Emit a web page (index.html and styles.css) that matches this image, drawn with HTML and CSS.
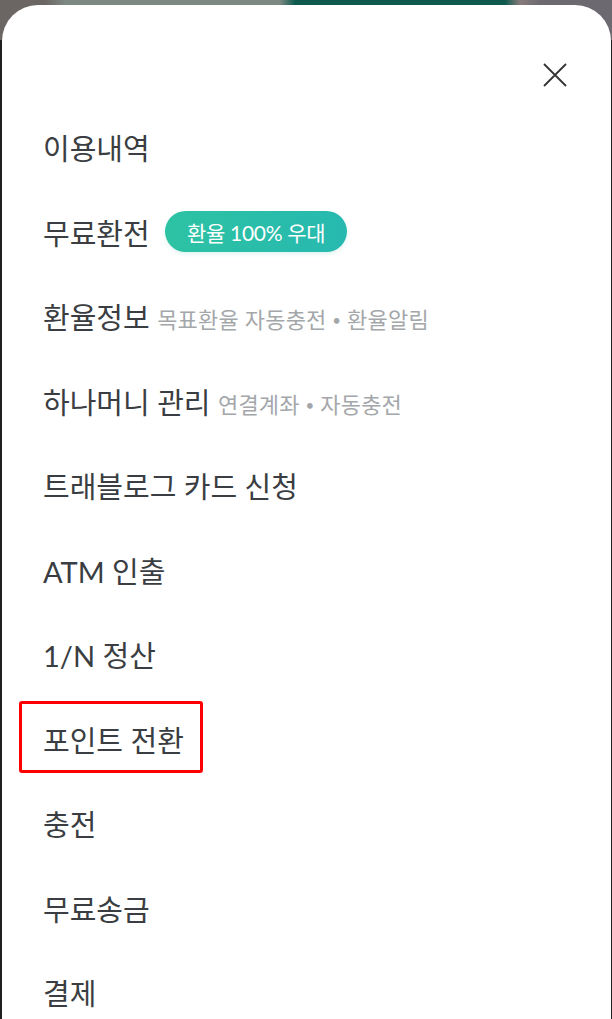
FILE: index.html
```html
<!DOCTYPE html>
<html lang="ko">
<head>
    <meta charset="utf-8">
    <title>메뉴</title>
    <link rel="stylesheet" href="styles.css">
</head>
<body>
    <div class="sheet">
        <div class="sheet-head">
            <button class="close" aria-label="닫기">
                <svg width="24" height="24" viewBox="0 0 24 24">
                    <path d="M1 1 L23 23 M23 1 L1 23" stroke="#333" stroke-width="1.8" fill="none"/>
                </svg>
            </button>
        </div>
        <ul class="menu">
            <li class="menu-item">이용내역</li>
            <li class="menu-item">무료환전 <span class="badge">환율 100% 우대</span></li>
            <li class="menu-item">환율정보 <span class="sub">목표환율 자동충전 <span class="dot">•</span> 환율알림</span></li>
            <li class="menu-item">하나머니 관리 <span class="sub">연결계좌 <span class="dot">•</span> 자동충전</span></li>
            <li class="menu-item">트래블로그 카드 신청</li>
            <li class="menu-item">ATM 인출</li>
            <li class="menu-item">1/N 정산</li>
            <li class="menu-item marked">포인트 전환</li>
            <li class="menu-item">충전</li>
            <li class="menu-item">무료송금</li>
            <li class="menu-item">결제</li>
        </ul>
    </div>
</body>
</html>
```

FILE: styles.css
```css
body {
    margin: 0;
    background-color: #202020;
    background-image: linear-gradient(to right, #6b6664 0, #6b6664 45px, #7d8882 65px, #7d8882 280px, #0f5a4e 295px, #0f5a4e 505px, #887a7b 520px, #6c6a70 540px, #6c6a70 100%);
    background-size: 100% 40px;
    background-repeat: no-repeat;
    font-family: Lato, "Noto Sans CJK KR", sans-serif;
    color: #3a3d41;
}
.sheet {
    margin: 5px 1px 0 2px;
    min-height: 1014px;
    background: #fff;
    border-radius: 36px 36px 0 0;
}
.sheet-head {
    height: 100px;
    display: flex;
    justify-content: flex-end;
    align-items: flex-start;
    padding-right: 44px;
    box-sizing: border-box;
    padding-top: 58px;
}
.close {
    border: none;
    background: none;
    padding: 0;
    width: 24px;
    height: 24px;
}
.menu {
    list-style: none;
    margin: 0;
    padding: 0;
}
.menu-item {
    height: 84.5px;
    display: flex;
    align-items: center;
    padding-left: 41px;
    font-size: 29px;
    white-space: pre;
    position: relative;
}
.badge {
    margin-left: 8px;
    width: 182px;
    height: 41px;
    border-radius: 21px;
    background: linear-gradient(to right, #2dc2a3, #27b9b0);
    box-shadow: 0 2px 4px rgba(40, 180, 160, 0.15);
    color: #fff;
    font-size: 21px;
    letter-spacing: -0.3px;
    display: flex;
    align-items: center;
    justify-content: center;
}
.sub {
    font-size: 22px;
    letter-spacing: 0.2px;
    color: #a4a7aa;
    padding-top: 4px;
}
.dot {
    font-size: 15px;
    vertical-align: 2px;
}
.marked::after {
    content: "";
    position: absolute;
    left: 17px;
    top: 4px;
    width: 184px;
    height: 72px;
    box-sizing: border-box;
    border: 3px solid #f00;
    border-radius: 3px;
}
```
